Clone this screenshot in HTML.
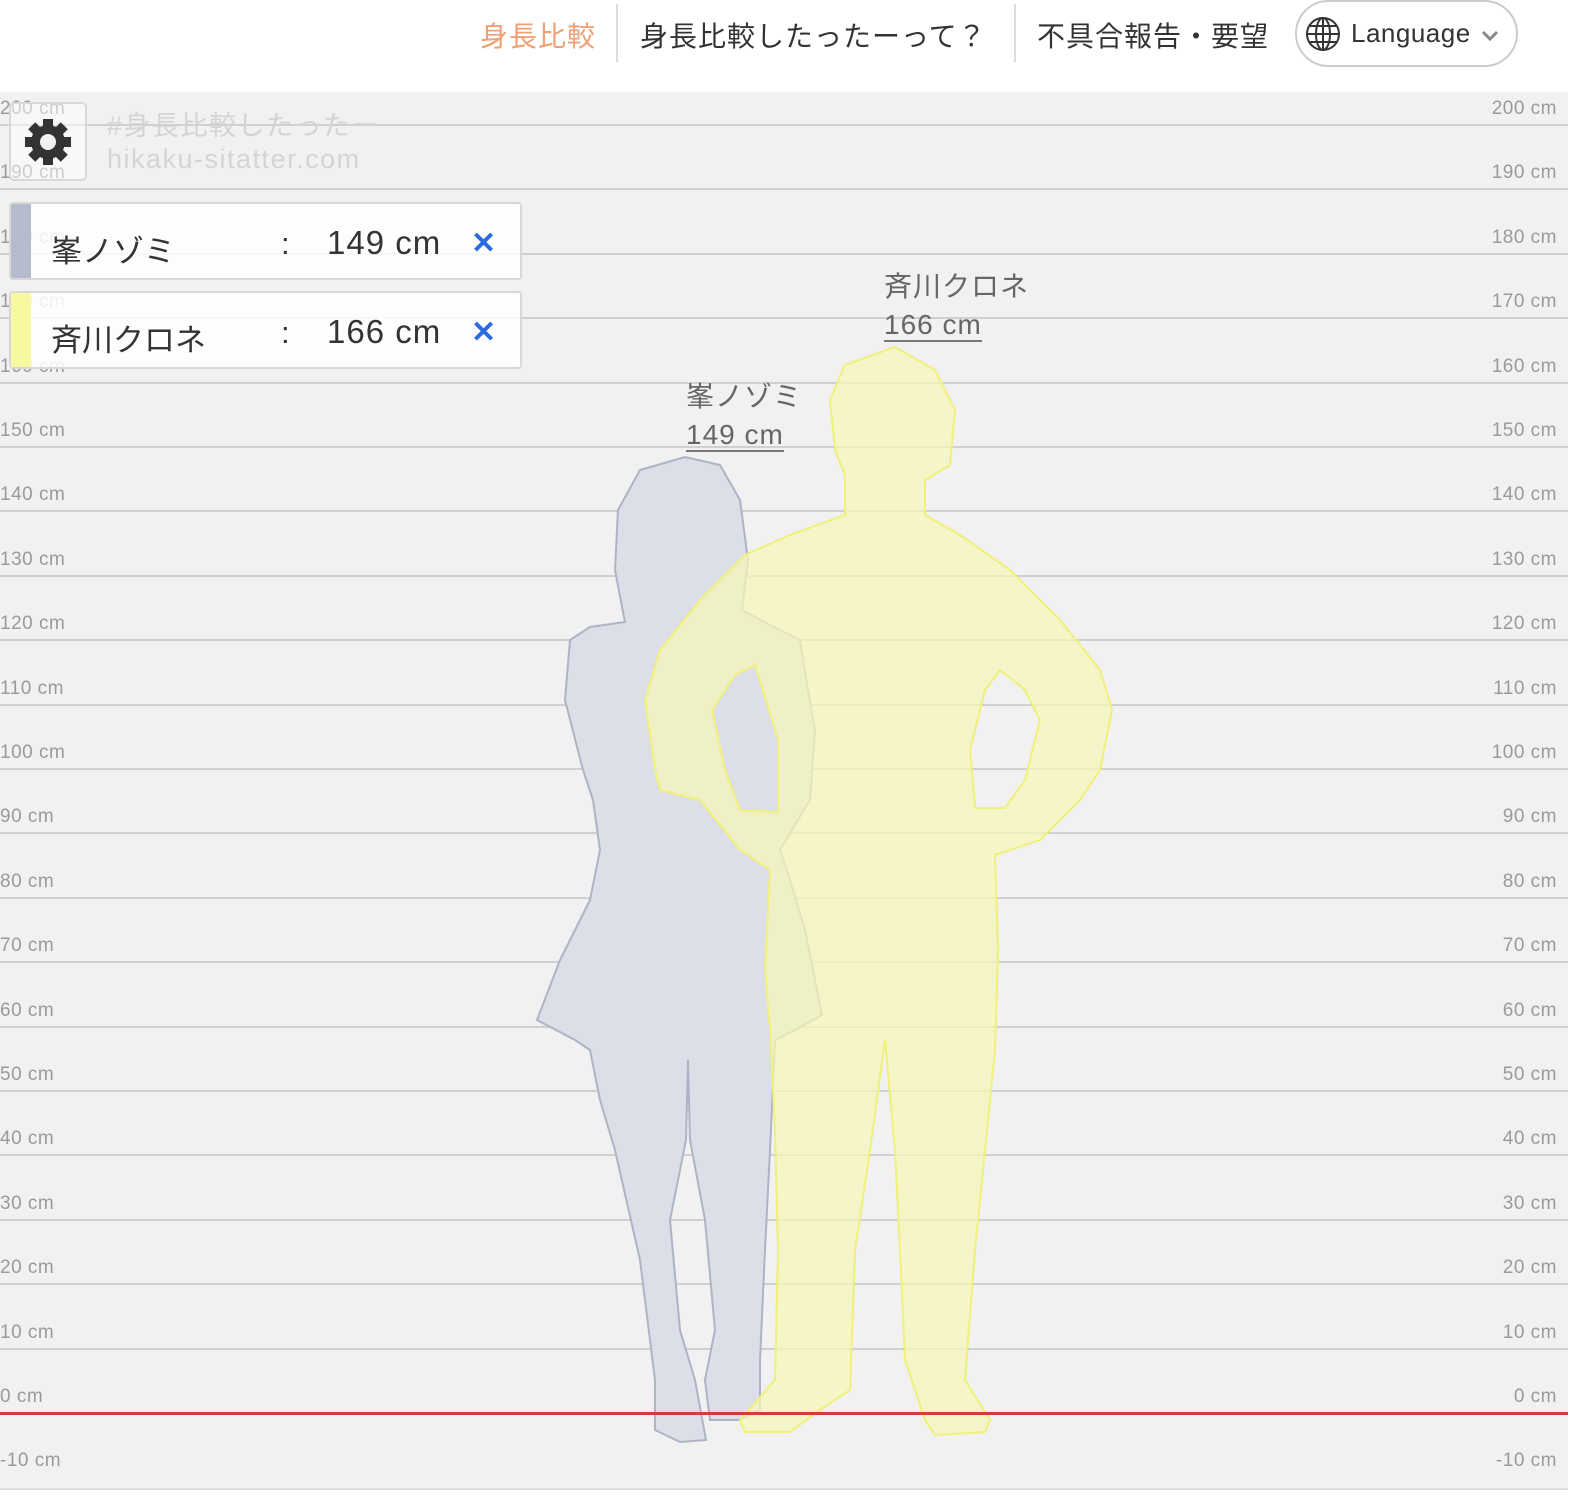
<!DOCTYPE html>
<html><head><meta charset="utf-8"><style>
*{margin:0;padding:0;box-sizing:border-box}
body{width:1583px;height:1496px;background:#fff;font-family:"Liberation Sans","Noto Sans CJK JP",sans-serif;position:relative;overflow:hidden}
.a{position:absolute;white-space:nowrap}
.nav{font-size:28px;color:#333;top:15px;letter-spacing:1px}
.sep{position:absolute;top:4px;width:2px;height:58px;background:#ddd}
#chart{position:absolute;left:0;top:92px;width:1568px;height:1398px;background:#f1f1f1;border-bottom:2px solid #ddd}
.ln{position:absolute;left:0;width:1568px;height:2px;background:#d0d0d0}
.lb{position:absolute;font-size:19px;color:#9a9a9a;letter-spacing:.5px}
.card{position:absolute;left:9px;width:513px;height:78px;background:rgba(255,255,255,.85);border:2px solid #d8d8d8;border-radius:4px;overflow:hidden}
.card .bar{position:absolute;left:0;top:0;bottom:0;width:20px}
.card .t{position:absolute;top:22px;font-size:31px;color:#333}
.card .v{font-size:33px;letter-spacing:1px;top:20px}
.card .x{position:absolute;left:460px;top:22px;font-size:30px;color:#2a6ce0;font-weight:bold}
.fl{position:absolute;font-size:28px;color:#666;line-height:38px;letter-spacing:1px}
.fl u{text-decoration:none;border-bottom:2px solid #777}
</style></head><body>
<div class="a nav" style="left:480px;color:#eea077">身長比較</div>
<div class="sep" style="left:616px"></div>
<div class="a nav" style="left:640px">身長比較したったーって？</div>
<div class="sep" style="left:1014px"></div>
<div class="a nav" style="left:1037px">不具合報告・要望</div>
<div class="a" style="left:1295px;top:0;width:223px;height:67px;border:2px solid #ccc;border-radius:34px"></div>
<svg class="a" style="left:1305px;top:16px" width="36" height="36" viewBox="0 0 36 36" fill="none" stroke="#333" stroke-width="2"><circle cx="18" cy="18" r="16"/><ellipse cx="18" cy="18" rx="7" ry="16"/><line x1="18" y1="2" x2="18" y2="34"/><line x1="2" y1="18" x2="34" y2="18"/><path d="M5 10h26M5 26h26"/></svg>
<div class="a" style="left:1351px;top:18px;font-size:26px;color:#333;letter-spacing:.5px">Language</div>
<svg class="a" style="left:1480px;top:29px" width="20" height="14" viewBox="0 0 20 14"><path d="M3 3l7 7 7-7" fill="none" stroke="#888" stroke-width="3"/></svg>

<div id="chart"></div>
<svg class="a" style="left:0;top:0" width="1583" height="1496">
<path fill="#dcdfe7" stroke="#aeb4c6" stroke-width="2" d="M685 457 L720 465 L740 500 L748 560 L742 610 L770 625 L800 640 L808 690 L815 730 L810 800 L780 850 L790 880 L805 930 L822 1015 L795 1030 L775 1040 L770 1150 L765 1250 L760 1360 L760 1410 L740 1420 L710 1420 L705 1380 L715 1330 L705 1220 L690 1140 L688 1060 L686 1140 L670 1220 L680 1330 L695 1380 L706 1440 L680 1442 L655 1430 L655 1380 L640 1260 L615 1150 L600 1100 L590 1050 L575 1040 L537 1020 L560 960 L590 900 L600 850 L593 800 L583 770 L565 700 L570 640 L590 627 L625 622 L615 570 L618 510 L640 470 Z"/>
<path fill="#f6f6b8" fill-opacity=".72" stroke="#f0f07a" stroke-width="2" fill-rule="evenodd" d="M895 347 L935 370 L955 410 L950 465 L925 480 L925 515 L960 535 L1010 570 L1060 620 L1100 670 L1112 710 L1100 770 L1080 800 L1040 840 L995 855 L998 950 L995 1050 L985 1150 L975 1250 L965 1380 L990 1420 L985 1432 L935 1435 L925 1420 L905 1360 L900 1250 L895 1150 L885 1040 L870 1150 L855 1250 L850 1390 L820 1410 L790 1432 L745 1432 L740 1420 L775 1380 L778 1250 L775 1130 L770 1030 L765 970 L770 870 L740 850 L700 800 L660 790 L655 770 L645 700 L660 650 L700 600 L745 555 L790 535 L845 515 L845 475 L835 450 L830 400 L845 365 Z M1000 670 L1025 690 L1040 720 L1025 780 L1005 808 L975 808 L970 750 L985 690 Z M755 665 L778 740 L778 812 L740 810 L725 770 L712 710 L735 675 Z"/>
</svg>
<div class="a" style="left:0;top:1412px;width:1568px;height:3px;background:#d83a3a"></div>

<div class="a" style="left:9px;top:102px;width:78px;height:79px;border:2px solid #d8d8d8;border-radius:5px;background:rgba(255,255,255,.5)"></div>
<svg class="a" style="left:23px;top:117px" width="50" height="50" viewBox="0 0 50 50"><g fill="#333"><circle cx="25" cy="25" r="17"/><rect x="20" y="2" width="10" height="46"/><rect x="20" y="2" width="10" height="46" transform="rotate(45 25 25)"/><rect x="20" y="2" width="10" height="46" transform="rotate(90 25 25)"/><rect x="20" y="2" width="10" height="46" transform="rotate(135 25 25)"/></g><circle cx="25" cy="25" r="8" fill="#f1f1f1"/></svg>
<div class="a" style="left:107px;top:110px;font-size:27px;color:#d4d4d4;line-height:33px;letter-spacing:1.5px">#身長比較したったー<br>hikaku-sitatter.com</div>

<div class="card" style="top:202px"><div class="bar" style="background:#b5bbcc"></div><div class="t" style="left:40px">峯ノゾミ</div><div class="t" style="left:270px">:</div><div class="t v" style="left:316px">149 cm</div><div class="x">✕</div></div>
<div class="card" style="top:291px"><div class="bar" style="background:#f8f8a0"></div><div class="t" style="left:40px">斉川クロネ</div><div class="t" style="left:270px">:</div><div class="t v" style="left:316px">166 cm</div><div class="x">✕</div></div>

<div class="fl" style="left:686px;top:378px">峯ノゾミ<br><u>149 cm</u></div>
<div class="fl" style="left:884px;top:268px">斉川クロネ<br><u>166 cm</u></div>

<script>
var c=document.getElementById('chart'),h='';
for(var i=0;i<=21;i++){var v=200-10*i;var y=125+64.4*i-92;
if(v>0)h+='<div class="ln" style="top:'+(y-1)+'px"></div>';
h+='<div class="lb" style="left:0;top:'+(y-27)+'px">'+v+' cm</div><div class="lb" style="right:11px;top:'+(y-27)+'px">'+v+' cm</div>';}
c.innerHTML=h;
</script>
</body></html>
